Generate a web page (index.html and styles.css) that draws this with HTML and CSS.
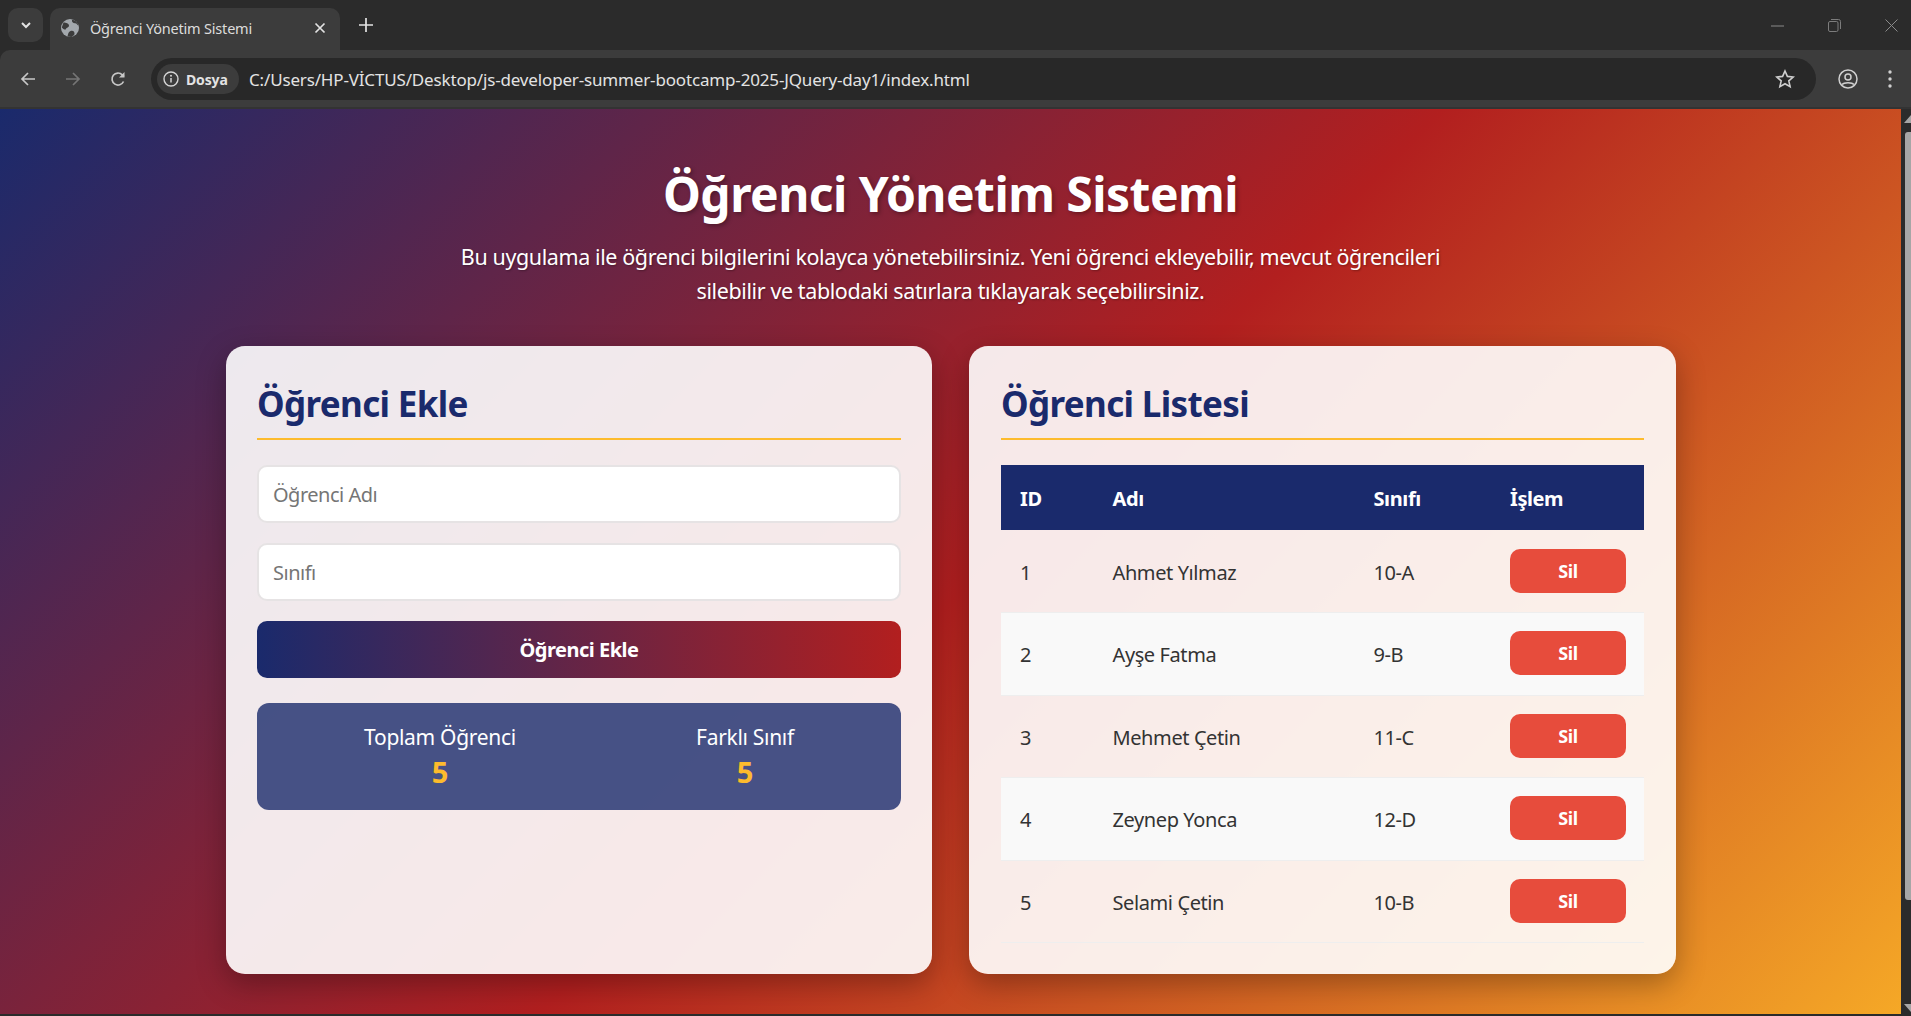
FILE: index.html
```html
<!DOCTYPE html>
<html lang="tr">
<head>
<meta charset="utf-8">
<title>Öğrenci Yönetim Sistemi</title>
<link rel="stylesheet" href="styles.css">
</head>
<body>
<div class="browser">
  <div class="tabstrip">
    <div class="tab-search"><svg width="12" height="12" viewBox="0 0 12 12"><path d="M2 4l4 4 4-4" fill="none" stroke="#e3e3e3" stroke-width="2"/></svg></div>
    <div class="tab">
      <svg class="favicon" width="18" height="18" viewBox="0 0 18 18"><circle cx="9" cy="9" r="9" fill="#a3a8ad"/><path d="M2.500 3.500C5 3.500 8 4.500 8 6.500S5.500 8.500 5 10 2 10 .8 8.500zM6.500 17.500c.5-2 .5-4.500 3-5.500s4 .5 4 2.500-1.500 2-3 3.500zM11 .8c-.5 2 1 3.500 3 3.500s2 1.500 3.500 2.500c-.5-3-3-5.500-6.500-6z" fill="#3c3c3c"/></svg>
      <span class="tab-title">Öğrenci Yönetim Sistemi</span>
      <svg class="tab-close" width="12" height="12" viewBox="0 0 12 12"><path d="M1.500 1.500l9 9M10.500 1.500l-9 9" stroke="#e3e3e3" stroke-width="1.700"/></svg>
    </div>
    <svg class="newtab" width="14" height="14" viewBox="0 0 14 14"><path d="M7 0v14M0 7h14" stroke="#e3e3e3" stroke-width="1.700"/></svg>
    <div class="win-controls">
      <svg width="13" height="2" viewBox="0 0 13 2"><path d="M0 1h13" stroke="#8a8a8a" stroke-width="1"/></svg>
      <svg width="13" height="13" viewBox="0 0 13 13"><rect x=".5" y="2.500" width="9.500" height="10" rx="1.500" fill="none" stroke="#7c7c7c"/><path d="M3 .5h7.500a2 2 0 0 1 2 2V10" fill="none" stroke="#7c7c7c"/></svg>
      <svg width="13" height="13" viewBox="0 0 13 13"><path d="M.5.500l12 12M12.500.500l-12 12" stroke="#8a8a8a" stroke-width="1"/></svg>
    </div>
  </div>
  <div class="toolbar">
    <svg class="nav-icon" width="18" height="18" viewBox="0 0 18 18"><path d="M16 9H3M9 3L3 9l6 6" fill="none" stroke="#c7c7c7" stroke-width="1.700"/></svg>
    <svg class="nav-icon" width="18" height="18" viewBox="0 0 18 18"><path d="M2 9h13M9 3l6 6-6 6" fill="none" stroke="#757575" stroke-width="1.700"/></svg>
    <svg class="nav-icon" width="18" height="18" viewBox="0 0 18 18"><path d="M14.500 11.500A6 6 0 1 1 13.300 4.800L15 6.500" fill="none" stroke="#c7c7c7" stroke-width="1.700"/><path d="M15.500 2v5.500H10z" fill="#c7c7c7"/></svg>
    <div class="omnibox">
      <div class="chip">
        <svg width="16" height="16" viewBox="0 0 16 16"><circle cx="8" cy="8" r="7" fill="none" stroke="#d5d5d5" stroke-width="1.400"/><path d="M8 7v4.500" stroke="#d5d5d5" stroke-width="1.500"/><circle cx="8" cy="4.800" r="1" fill="#d5d5d5"/></svg>
        <span class="chip-text">Dosya</span>
      </div>
      <span class="url">C:/Users/HP-VİCTUS/Desktop/js-developer-summer-bootcamp-2025-JQuery-day1/index.html</span>
      <svg class="star" width="20" height="20" viewBox="0 0 20 20"><path d="M10 2l2.400 5.400 5.800.6-4.400 3.900 1.300 5.700L10 14.700l-5.100 2.900 1.300-5.700L1.800 8l5.800-.6z" fill="none" stroke="#cfcfcf" stroke-width="1.600"/></svg>
    </div>
    <svg class="avatar" width="20" height="20" viewBox="0 0 20 20"><circle cx="10" cy="10" r="9" fill="none" stroke="#d0d0d0" stroke-width="1.500"/><circle cx="10" cy="8" r="3" fill="none" stroke="#d0d0d0" stroke-width="1.500"/><path d="M4 15.500c2-2.500 10-2.500 12 0" fill="none" stroke="#d0d0d0" stroke-width="1.500"/></svg>
    <svg class="kebab" width="4" height="18" viewBox="0 0 4 18"><circle cx="2" cy="2" r="1.700" fill="#d0d0d0"/><circle cx="2" cy="9" r="1.700" fill="#d0d0d0"/><circle cx="2" cy="16" r="1.700" fill="#d0d0d0"/></svg>
  </div>
  <div class="viewport">
    <main class="page">
      <header class="hero">
        <h1 class="hero-title">Öğrenci Yönetim Sistemi</h1>
        <p class="hero-text">Bu uygulama ile öğrenci bilgilerini kolayca yönetebilirsiniz. Yeni öğrenci ekleyebilir, mevcut öğrencileri silebilir ve tablodaki satırlara tıklayarak seçebilirsiniz.</p>
      </header>
      <div class="cards">
        <section class="card card-form">
          <h2 class="card-title">Öğrenci Ekle</h2>
          <form class="form">
            <input class="field" type="text" placeholder="Öğrenci Adı">
            <input class="field" type="text" placeholder="Sınıfı">
            <button class="submit" type="button">Öğrenci Ekle</button>
          </form>
          <div class="stats">
            <div class="stat"><div class="stat-label">Toplam Öğrenci</div><div class="stat-value">5</div></div>
            <div class="stat"><div class="stat-label">Farklı Sınıf</div><div class="stat-value">5</div></div>
          </div>
        </section>
        <section class="card card-list">
          <h2 class="card-title">Öğrenci Listesi</h2>
          <table class="table">
            <thead>
              <tr><th class="col-id">ID</th><th class="col-name">Adı</th><th class="col-class">Sınıfı</th><th class="col-action">İşlem</th></tr>
            </thead>
            <tbody>
              <tr><td>1</td><td>Ahmet Yılmaz</td><td>10-A</td><td><button class="del" type="button">Sil</button></td></tr>
              <tr><td>2</td><td>Ayşe Fatma</td><td>9-B</td><td><button class="del" type="button">Sil</button></td></tr>
              <tr><td>3</td><td>Mehmet Çetin</td><td>11-C</td><td><button class="del" type="button">Sil</button></td></tr>
              <tr><td>4</td><td>Zeynep Yonca</td><td>12-D</td><td><button class="del" type="button">Sil</button></td></tr>
              <tr><td>5</td><td>Selami Çetin</td><td>10-B</td><td><button class="del" type="button">Sil</button></td></tr>
            </tbody>
          </table>
        </section>
      </div>
    </main>
    <div class="scrollbar">
      <span class="arrow-up"></span>
      <span class="thumb"></span>
      <span class="arrow-down"></span>
    </div>
  </div>
</div>
</body>
</html>
```
FILE: styles.css
```css
* { box-sizing: border-box; }
html, body { margin: 0; padding: 0; height: 100%; overflow: hidden; }
body { font-family: "Noto Sans", "Open Sans", sans-serif; }
.browser { width: 1911px; height: 1016px; display: flex; flex-direction: column; background: #2b2b2b; }

.tabstrip { height: 50px; flex: none; display: flex; align-items: flex-end; padding-left: 8px; background: #2b2b2b; }
.tab-search { width: 35px; height: 34px; margin-bottom: 8px; border-radius: 10px; background: #3c3c3c; display: flex; align-items: center; justify-content: center; }
.tab { width: 290px; height: 42px; margin-left: 7px; border-radius: 10px 10px 0 0; background: #3c3c3c; display: flex; align-items: center; padding: 0 14px 2px 11px; }
.favicon { flex: none; }
.tab-title { flex: 1; margin-left: 11px; font-size: 14.500px; letter-spacing: -.2px; color: #dcdcdc; white-space: nowrap; }
.tab-close { flex: none; }
.newtab { margin: 0 0 18px 19px; }
.win-controls { margin: 0 0 18px auto; display: flex; align-items: center; gap: 44px; padding-right: 13px; }

.toolbar { height: 57px; flex: none; display: flex; align-items: center; background: #3c3c3c; padding: 1px 0 0 19px; border-radius: 10px 0 0 0; }
.nav-icon { flex: none; margin-right: 27px; }
.nav-icon:nth-of-type(3) { margin-right: 24px; }
.omnibox { flex: none; width: 1665px; height: 42px; border-radius: 21px; background: #282828; display: flex; align-items: center; padding: 0 21px 0 6px; }
.chip { height: 30px; width: 82px; border-radius: 15px; background: #3c3c3c; display: flex; align-items: center; padding-left: 6px; gap: 7px; }
.chip-text { font-size: 14px; font-weight: 700; letter-spacing: -.15px; color: #e3e3e3; }
.url { flex: 1; margin-left: 10px; font-size: 17px; letter-spacing: -.16px; color: #e3e3e3; white-space: nowrap; }
.avatar { flex: none; margin-left: 22px; }
.kebab { flex: none; margin-left: 30px; }

.viewport { height: 907px; flex: none; display: flex; overflow: hidden; border-top: 2px solid #333; }
.page { width: 1901px; height: 985px; flex: none; padding-top: 53px; background: linear-gradient(135deg, #1a2a6c, #b21f1f, #f9b027); }
.hero { text-align: center; color: #fff; }
.hero-title { margin: 0; font-size: 48px; line-height: 64px; font-weight: 700; letter-spacing: -.55px; text-shadow: 2px 2px 4px rgba(0,0,0,.3); }
.hero-text { width: 1000px; margin: 14px auto 0; font-size: 21.500px; line-height: 34px; letter-spacing: -.4px; text-shadow: 1px 1px 2px rgba(0,0,0,.3); }
.cards { width: 1450px; margin: 38px 0 0 226px; display: grid; grid-template-columns: 706px 707px; column-gap: 37px; }
.card { height: 628px; padding: 32px 31px; border-radius: 19px; background: rgba(255,255,255,.9); box-shadow: 0 10px 30px rgba(0,0,0,.3); }
.card-list { padding-left: 32px; padding-right: 32px; }
.card-title { margin: 0 0 25px; height: 62px; border-bottom: 2px solid #fdbb2d; font-size: 35px; line-height: 52px; font-weight: 700; letter-spacing: -.65px; color: #1a2a6c; }

.form { display: flex; flex-direction: column; gap: 20px; }
.field { height: 58px; width: 100%; padding: 0 14px; border: 2px solid #e6e3e4; border-radius: 10px; background: #fff; font: 20px "Noto Sans", sans-serif; letter-spacing: -.5px; }
.field::placeholder { color: #757575; opacity: 1; }
.submit { height: 57px; border: 0; border-radius: 10px; background: linear-gradient(90deg, #1a2a6c, #b21f1f); color: #fff; font: 700 20px "Noto Sans", sans-serif; letter-spacing: -.5px; }
.stats { height: 107px; margin-top: 25px; padding: 20px 17px 0; border-radius: 12px; background: rgba(26,42,108,.8); display: flex; justify-content: space-around; color: #fff; text-align: center; }
.stat-label { font-size: 21px; line-height: 28px; letter-spacing: -.3px; }
.stat-value { margin-top: 5px; font-size: 29px; line-height: 32px; font-weight: 700; color: #fdbb2d; }

.table { width: 100%; border-collapse: collapse; table-layout: fixed; font-size: 20px; letter-spacing: -.4px; color: #333; }
.col-id { width: 92.500px; }
.col-name { width: 261px; }
.col-class { width: 136.500px; }
.table th { height: 65px; padding: 2px 19px 0; text-align: left; background: #1a2a6c; color: #fff; font-weight: 700; }
.table td { height: 82.500px; padding: 21px 19px 19px; border-bottom: 1px solid #eee; }
.table tbody tr:nth-child(even) { background: #f9f9f9; }
.del { display: block; width: 116px; height: 44px; margin-top: -3px; border: 0; border-radius: 10px; background: #e74c3c; color: #fff; font: 700 18px "Noto Sans", sans-serif; letter-spacing: -.4px; }

.scrollbar { width: 10px; flex: none; position: relative; background: #2b2b2b; }
.thumb { position: absolute; left: 4px; right: 0; top: 23px; height: 768px; border-radius: 3px 0 0 3px; background: #a6a6a6; }
.arrow-up { position: absolute; left: 3px; top: 6px; border: solid transparent; border-width: 0 0 8px 7px; border-bottom-color: #a6a6a6; }
.arrow-down { position: absolute; left: 3px; bottom: 2px; border: solid transparent; border-width: 8px 0 0 7px; border-top-color: #a6a6a6; }
```
